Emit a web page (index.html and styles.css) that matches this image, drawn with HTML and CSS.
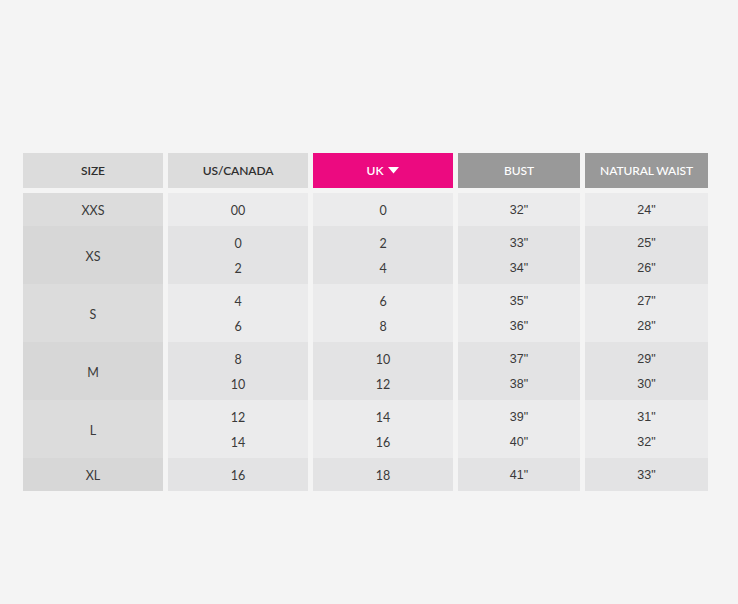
FILE: index.html
```html
<!DOCTYPE html>
<html>
<head>
<meta charset="utf-8">
<link rel="stylesheet" href="styles.css">
</head>
<body>
<div class="chart">
  <div class="head">
    <div class="h h-light">SIZE</div>
    <div class="h h-light">US/CANADA</div>
    <div class="h h-pink">UK <svg class="caret" width="11" height="7" viewBox="0 0 11 7"><path d="M0 0h11L5.5 6.5z" fill="#fff"/></svg></div>
    <div class="h h-dark">BUST</div>
    <div class="h h-dark">NATURAL WAIST</div>
  </div>
  <div class="body">
    <div class="row single odd">
      <div class="c size">XXS</div>
      <div class="c"><span>00</span></div>
      <div class="c"><span>0</span></div>
      <div class="c m"><span>32"</span></div>
      <div class="c m"><span>24"</span></div>
    </div>
    <div class="row double even">
      <div class="c size">XS</div>
      <div class="c"><span>0</span><span>2</span></div>
      <div class="c"><span>2</span><span>4</span></div>
      <div class="c m"><span>33"</span><span>34"</span></div>
      <div class="c m"><span>25"</span><span>26"</span></div>
    </div>
    <div class="row double odd">
      <div class="c size">S</div>
      <div class="c"><span>4</span><span>6</span></div>
      <div class="c"><span>6</span><span>8</span></div>
      <div class="c m"><span>35"</span><span>36"</span></div>
      <div class="c m"><span>27"</span><span>28"</span></div>
    </div>
    <div class="row double even">
      <div class="c size">M</div>
      <div class="c"><span>8</span><span>10</span></div>
      <div class="c"><span>10</span><span>12</span></div>
      <div class="c m"><span>37"</span><span>38"</span></div>
      <div class="c m"><span>29"</span><span>30"</span></div>
    </div>
    <div class="row double odd">
      <div class="c size">L</div>
      <div class="c"><span>12</span><span>14</span></div>
      <div class="c"><span>14</span><span>16</span></div>
      <div class="c m"><span>39"</span><span>40"</span></div>
      <div class="c m"><span>31"</span><span>32"</span></div>
    </div>
    <div class="row single even">
      <div class="c size">XL</div>
      <div class="c"><span>16</span></div>
      <div class="c"><span>18</span></div>
      <div class="c m"><span>41"</span></div>
      <div class="c m"><span>33"</span></div>
    </div>
  </div>
</div>
</body>
</html>
```
FILE: styles.css
```css
html, body {
  margin: 0;
  padding: 0;
  background: #f4f4f4;
}
body {
  width: 738px;
  height: 604px;
  font-family: Lato, "Open Sans", sans-serif;
  color: #3a3a3a;
}
.chart {
  padding: 153px 0 0 23px;
  display: flex;
  flex-direction: column;
  gap: 5px;
}
.head, .row {
  display: grid;
  grid-template-columns: 140px 140px 140px 122px 123px;
  column-gap: 5px;
}
.h {
  height: 35px;
  display: flex;
  align-items: center;
  justify-content: center;
  font-size: 12px;
  font-weight: 600;
  letter-spacing: -0.1px;
}
.h-light { background: #dcdcdc; color: #2e2e2e; }
.h-pink { background: #ec0a80; color: #fff; gap: 5px; }
.h-dark { background: #999999; color: #fff; font-weight: 500; }
.caret { margin-top: -1px; }
.body {
  display: flex;
  flex-direction: column;
}
.single { height: 33px; }
.double { height: 58px; }
.c {
  display: flex;
  flex-direction: column;
  align-items: center;
  justify-content: center;
  padding-top: 2px;
  font-size: 12.5px;
  line-height: 25px;
}
.c.m {
  font-family: "Liberation Sans", Arial, sans-serif;
  font-size: 12.5px;
}
.odd .c { background: #ebebec; }
.even .c { background: #e3e3e4; }
.odd .c.size { background: #dcdcdc; }
.even .c.size { background: #d7d7d7; }
.c.size { font-size: 12.5px; }
```
